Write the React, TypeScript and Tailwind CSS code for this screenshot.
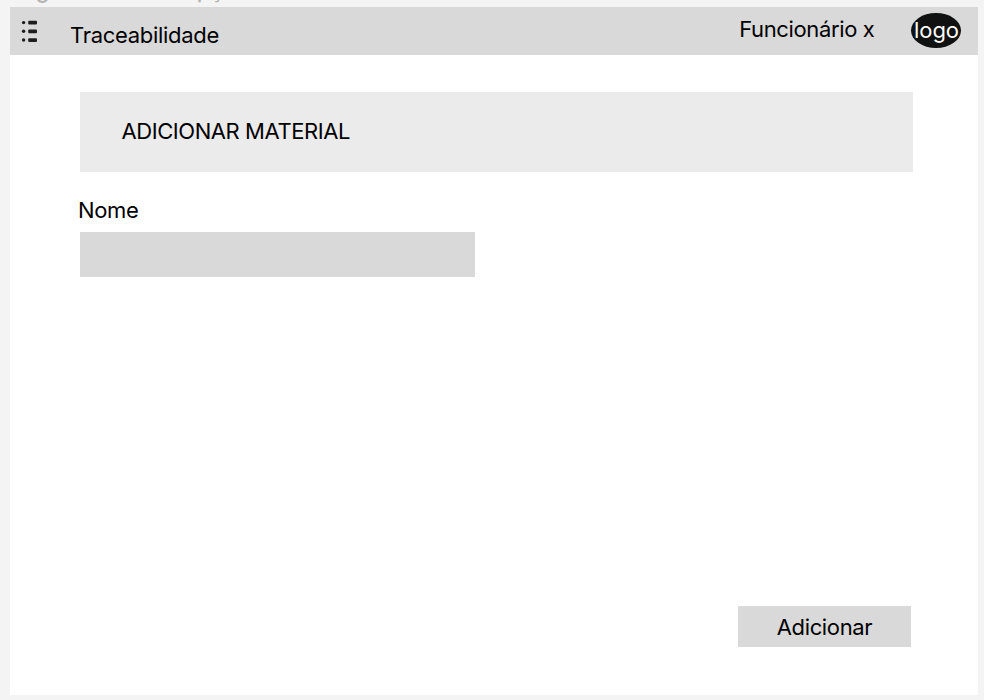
export default function App() {
  return (
    <div className="flex h-[700px] w-[984px] flex-col overflow-hidden bg-[#f4f4f4] pl-[10px] font-['Inter',sans-serif] text-[22px] font-normal leading-[28px] tracking-[-0.36px] text-black">
      <div className="flex h-[7px] shrink-0 items-end overflow-hidden whitespace-nowrap font-medium text-[#b3b3b3]">
        <span className="-mt-[24px] mb-[3px] tracking-[-0.4px]">Página adicionar opção</span>
      </div>
      <main className="flex h-[688px] w-[967.5px] shrink-0 flex-col bg-white">
        <header className="flex h-[47.5px] shrink-0 bg-[#d9d9d9]">
          <svg className="ml-[11px] mt-[13px] h-[24px] w-[18px]" viewBox="0 0 18 24" fill="#1d1d1f">
            <circle cx="2.6" cy="2.6" r="1.7" />
            <circle cx="2.6" cy="11.3" r="1.7" />
            <circle cx="2.6" cy="20" r="1.7" />
            <rect x="7.2" y="0.8" width="8.8" height="3.7" rx="1" />
            <rect x="7.2" y="9.5" width="8.8" height="3.7" rx="1" />
            <rect x="7.2" y="18.2" width="8.8" height="3.7" rx="1" />
          </svg>
          <h1 className="ml-[31px] mt-[13.5px] tracking-[-0.3px]">Traceabilidade</h1>
          <span className="ml-auto mt-[8px]">Funcionário x</span>
          <div className="ml-[36.5px] mr-[16.5px] mt-[6px] flex h-[35px] w-[50px] items-center justify-center rounded-[50%] bg-[#101211] pb-px pl-px tracking-[-0.1px] text-white">logo</div>
        </header>
        <h2 className="ml-[70px] mt-[37px] flex h-[80.5px] w-[833px] shrink-0 items-center bg-[#ebebeb] pb-px pl-[41.5px] tracking-[-0.43px]">ADICIONAR MATERIAL</h2>
        <label className="ml-[68px] mt-[24px] flex w-[397px] flex-col">
          Nome
          <input className="ml-[2px] mt-[8px] h-[45px] w-[395px] bg-[#d9d9d9] px-3 outline-none" />
        </label>
        <button className="mb-[48px] ml-auto mr-[66.5px] mt-auto h-[41.5px] w-[173px] bg-[#d9d9d9] pt-[2px]">Adicionar</button>
      </main>
    </div>
  );
}
